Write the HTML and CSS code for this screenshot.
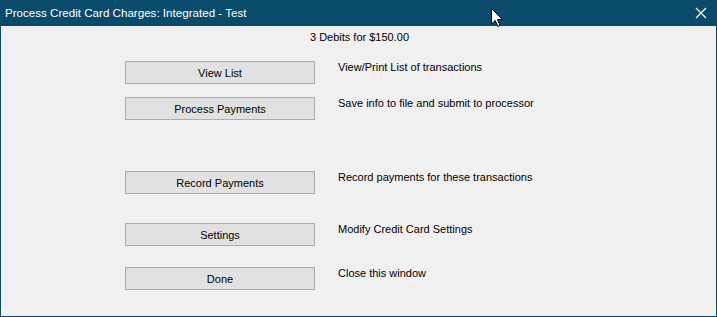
FILE: index.html
```html
<!DOCTYPE html>
<html lang="en">
<head>
  <meta charset="UTF-8" />
  <title>Process Credit Card Charges</title>
  <link rel="stylesheet" href="styles.css">
</head>
<body>
  <div class="window">
    <div class="titlebar">
      <span class="title">Process Credit Card Charges: Integrated - Test</span>
      <svg class="close" width="12" height="12" viewBox="0 0 12 12">
        <path d="M1 1 L11 11 M11 1 L1 11" stroke="#fff" stroke-width="1.2" fill="none"/>
      </svg>
    </div>

    <div class="content">
      <p class="summary">3 Debits for $150.00</p>

      <div class="row first">
        <button>View List</button>
        <span class="desc">View/Print List of transactions</span>
      </div>
      <div class="row second">
        <button>Process Payments</button>
        <span class="desc">Save info to file and submit to processor</span>
      </div>
      <div class="row third">
        <button>Record Payments</button>
        <span class="desc">Record payments for these transactions</span>
      </div>
      <div class="row fourth">
        <button>Settings</button>
        <span class="desc">Modify Credit Card Settings</span>
      </div>
      <div class="row fifth">
        <button>Done</button>
        <span class="desc">Close this window</span>
      </div>
    </div>

    <svg class="cursor" width="13" height="20" viewBox="0 0 13 20">
      <path d="M0.5 0.5 L0.5 16 L4.2 12.4 L6.8 18.5 L9 17.5 L6.5 11.6 L11.5 11.6 Z" fill="#fff" stroke="#000" stroke-width="1"/>
    </svg>
  </div>
</body>
</html>
```

FILE: styles.css
```css
body {
  margin: 0;
  font-family: 'Liberation Sans', Arial, sans-serif;
  font-size: 11px;
  color: #000;
}
.window {
  position: relative;
  width: 717px;
  height: 317px;
  box-sizing: border-box;
  border: 1px solid #0a4b6b;
  border-top: none;
  background: #f0f0f0;
  overflow: hidden;
}
.titlebar {
  height: 26px;
  margin: 0 -1px;
  background: #0a4b6b;
  color: #fff;
  display: flex;
  align-items: center;
  justify-content: space-between;
  padding: 0 10px 0 5px;
}
.title {
  font-size: 11.6px;
  padding-bottom: 1px;
}
.summary {
  margin: 3px 0 0;
  text-align: center;
  line-height: 16px;
  padding-left: 2px;
}
.row {
  display: flex;
  align-items: flex-start;
  padding-left: 124px;
}
.row.first { margin-top: 16px; }
.row.second { margin-top: 13px; }
.row.third { margin-top: 51px; }
.row.fourth { margin-top: 29px; }
.row.fifth { margin-top: 21px; }
button {
  width: 190px;
  height: 23px;
  padding: 0;
  background: #e1e1e1;
  border: 1px solid #adadad;
  font-family: inherit;
  font-size: 11px;
  color: #000;
}
.desc {
  margin-left: 23px;
  line-height: 14px;
  margin-top: -1px;
}
.cursor {
  position: absolute;
  left: 490px;
  top: 8px;
}
```
